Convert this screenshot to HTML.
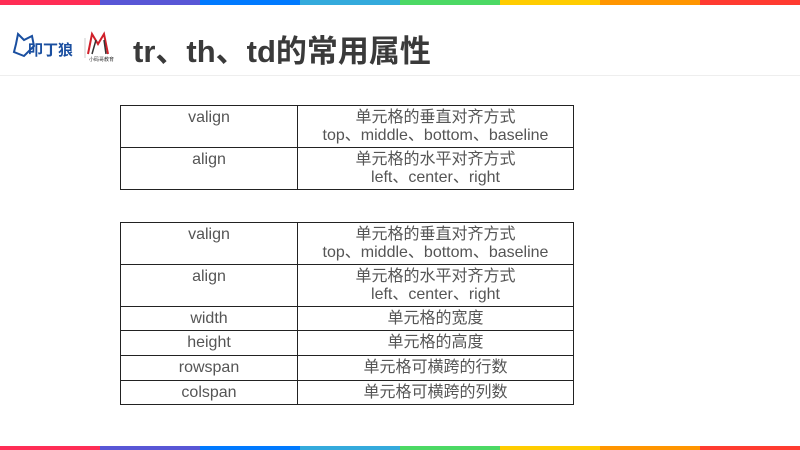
<!DOCTYPE html><html><head><meta charset="utf-8"><style>
body{margin:0;width:800px;height:450px;position:relative;background:#fff;overflow:hidden;font-family:"Liberation Sans","Noto Sans CJK SC",sans-serif}
.bar{position:absolute;left:0;width:800px;display:flex}
.bar div{flex:1}
.title{position:absolute;left:133px;top:26px;font-size:31px;font-weight:bold;color:#3a3a3a}
.hl{position:absolute;left:0;top:75px;width:800px;height:1px;background:#eee}
table{position:absolute;left:120px;border-collapse:collapse;font-size:16px;color:#555;}
td{border:1px solid #222;text-align:center;vertical-align:top;padding:3px 0 0;line-height:18px}
td:first-child{width:176px}td:last-child{width:275px}
</style></head><body>
<div class="bar" style="top:0;height:5px"><div style="background:#ff2d55"></div><div style="background:#5856d6"></div><div style="background:#007aff"></div><div style="background:#34aadc"></div><div style="background:#4cd964"></div><div style="background:#ffcc00"></div><div style="background:#ff9500"></div><div style="background:#ff3b30"></div></div>
<div class="bar" style="top:446px;height:4px"><div style="background:#ff2d55"></div><div style="background:#5856d6"></div><div style="background:#007aff"></div><div style="background:#34aadc"></div><div style="background:#4cd964"></div><div style="background:#ffcc00"></div><div style="background:#ff9500"></div><div style="background:#ff3b30"></div></div>
<svg style="position:absolute;left:10px;top:30px" width="115" height="32">
<path d="M8 4 L14 10 L22 6 L24 16 L14 26 L4 22 L6 14Z" fill="none" stroke="#1a4fa0" stroke-width="2"/>
<text x="18" y="25" font-size="15" font-weight="bold" fill="#1a4fa0" font-family="Noto Sans CJK SC">叩丁狼</text>
<line x1="75" y1="8" x2="75" y2="28" stroke="#ccc"/>
<path d="M78 24 L82 4 L88 14 L94 4 L98 24" fill="none" stroke="#d0202a" stroke-width="2"/>
<path d="M82 24 L86 10 M94 10 L96 24" stroke="#333" stroke-width="1.5"/>
<text x="79" y="31" font-size="5" fill="#333" font-family="Noto Sans CJK SC">小码哥教育</text>
</svg>
<div class="title">tr、th、td的常用属性</div>
<div class="hl"></div>
<table style="top:105px">
<tr style="height:42px"><td>valign</td><td>单元格的垂直对齐方式<br>top、middle、bottom、baseline</td></tr>
<tr style="height:42px"><td>align</td><td>单元格的水平对齐方式<br>left、center、right</td></tr>
</table>
<table style="top:222px">
<tr style="height:42px"><td>valign</td><td>单元格的垂直对齐方式<br>top、middle、bottom、baseline</td></tr>
<tr style="height:42px"><td>align</td><td>单元格的水平对齐方式<br>left、center、right</td></tr>
<tr style="height:24px"><td>width</td><td>单元格的宽度</td></tr>
<tr style="height:25px"><td>height</td><td>单元格的高度</td></tr>
<tr style="height:25px"><td>rowspan</td><td>单元格可横跨的行数</td></tr>
<tr style="height:24px"><td>colspan</td><td>单元格可横跨的列数</td></tr>
</table>
</body></html>
